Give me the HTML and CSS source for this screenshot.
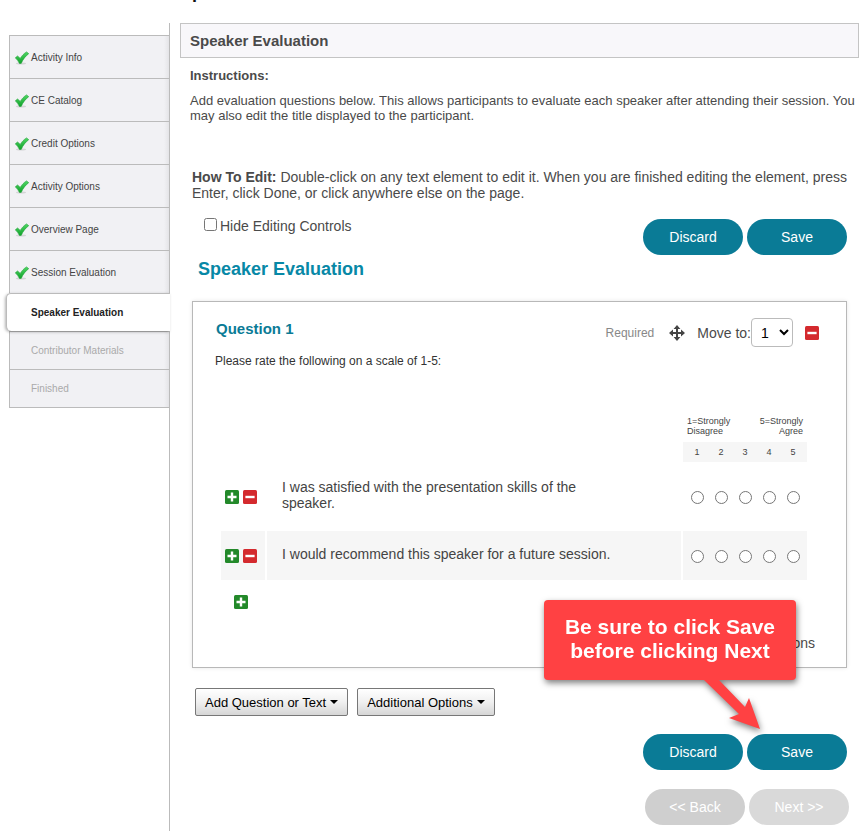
FILE: index.html
```html
<!DOCTYPE html>
<html lang="en">
<head>
    <meta charset="UTF-8">
    <meta name="viewport" content="width=device-width, initial-scale=1.0">
    <title>Speaker Evaluation</title>
    <link rel="stylesheet" href="styles.css">
</head>
<body>

    <!-- Shared icons -->
    <svg width="0" height="0" class="sprite" aria-hidden="true">
        <defs>
            <linearGradient id="check-fill" x1="0" y1="0" x2="0" y2="1">
                <stop offset="0" stop-color="#4fd764"/>
                <stop offset="1" stop-color="#12a22c"/>
            </linearGradient>
        </defs>
        <symbol id="check" viewBox="0 0 14 14">
            <ellipse cx="6" cy="12.6" rx="5" ry="1" fill="#d4d4d6"/>
            <path d="M0.3 6.8 L2.6 5 L5.2 7.4 C6.8 4.8 8.8 2.6 11.6 0.9 L13.7 2.7 C10.6 5 8 8.2 6.2 12.4 L4.4 12.4 C3.4 10.2 2 8.4 0.3 6.8 Z" fill="url(#check-fill)" stroke="#1da334" stroke-width="0.6"/>
        </symbol>
        <symbol id="plus" viewBox="0 0 14 14">
            <rect width="14" height="14" rx="1.5" fill="#23892a"/>
            <path d="M7 2.5V11.5M2.5 7H11.5" stroke="#fff" stroke-width="2.4"/>
        </symbol>
        <symbol id="minus" viewBox="0 0 14 14">
            <rect width="14" height="14" rx="1.5" fill="#d42a2e"/>
            <path d="M2.4 7H11.6" stroke="#fff" stroke-width="2.4"/>
        </symbol>
    </svg>

    <header class="page-title"><h1>Speaker Evaluation</h1></header>

    <div class="layout">
        <nav class="sidebar">
            <a href="#" class="step"><svg><use href="#check"/></svg>Activity Info</a>
            <a href="#" class="step"><svg><use href="#check"/></svg>CE Catalog</a>
            <a href="#" class="step"><svg><use href="#check"/></svg>Credit Options</a>
            <a href="#" class="step"><svg><use href="#check"/></svg>Activity Options</a>
            <a href="#" class="step"><svg><use href="#check"/></svg>Overview Page</a>
            <a href="#" class="step"><svg><use href="#check"/></svg>Session Evaluation</a>
            <a href="#" class="step active">Speaker Evaluation</a>
            <a href="#" class="step pending">Contributor Materials</a>
            <a href="#" class="step pending">Finished</a>
        </nav>

        <main class="content">
            <h2 class="section-header">Speaker Evaluation</h2>
            <div class="instructions">
                <h3>Instructions:</h3>
                <p>Add evaluation questions below. This allows participants to evaluate each speaker after attending their session. You may also edit the title displayed to the participant.</p>
            </div>

            <div class="editor">
                <p class="how-to"><strong>How To Edit:</strong> Double-click on any text element to edit it. When you are finished editing the element, press Enter, click Done, or click anywhere else on the page.</p>

                <div class="toolbar">
                    <label class="hide-controls"><input type="checkbox">Hide Editing Controls</label>
                    <div class="button-row">
                        <button class="btn">Discard</button>
                        <button class="btn">Save</button>
                    </div>
                </div>

                <h2 class="form-title">Speaker Evaluation</h2>

                <section class="question">
                    <div class="question-head">
                        <h3>Question 1</h3>
                        <span class="required">Required</span>
                        <svg class="move-icon" viewBox="0 0 16 16">
                            <path d="M8 2V14M2 8H14" stroke="#444" stroke-width="2"/>
                            <path d="M8 0L11.4 4H4.6ZM8 16L4.6 12H11.4ZM0 8L4 4.6V11.4ZM16 8L12 11.4V4.6Z" fill="#444"/>
                        </svg>
                        <label for="move-to">Move to:</label>
                        <select id="move-to"><option>1</option></select>
                        <button class="icon-btn" aria-label="Remove question"><svg><use href="#minus"/></svg></button>
                    </div>
                    <p class="question-text">Please rate the following on a scale of 1-5:</p>

                    <table class="rating">
                        <tr>
                            <td class="tools"></td>
                            <td></td>
                            <th class="legend">
                                <div class="legend-labels">
                                    <span>1=Strongly<br>Disagree</span>
                                    <span class="agree">5=Strongly<br>Agree</span>
                                </div>
                            </th>
                        </tr>
                        <tr>
                            <td></td>
                            <td></td>
                            <th class="numbers">
                                <div class="scale"><span>1</span><span>2</span><span>3</span><span>4</span><span>5</span></div>
                            </th>
                        </tr>
                        <tr class="row-first">
                            <td class="tools">
                                <div class="tool-icons">
                                    <button class="icon-btn" aria-label="Add row"><svg><use href="#plus"/></svg></button>
                                    <button class="icon-btn" aria-label="Remove row"><svg><use href="#minus"/></svg></button>
                                </div>
                            </td>
                            <td class="statement">I was satisfied with the presentation skills of the speaker.</td>
                            <td>
                                <div class="scale">
                                    <span><input type="radio" name="skills" aria-label="1"></span>
                                    <span><input type="radio" name="skills" aria-label="2"></span>
                                    <span><input type="radio" name="skills" aria-label="3"></span>
                                    <span><input type="radio" name="skills" aria-label="4"></span>
                                    <span><input type="radio" name="skills" aria-label="5"></span>
                                </div>
                            </td>
                        </tr>
                        <tr class="row-alt">
                            <td class="tools">
                                <div class="tool-icons">
                                    <button class="icon-btn" aria-label="Add row"><svg><use href="#plus"/></svg></button>
                                    <button class="icon-btn" aria-label="Remove row"><svg><use href="#minus"/></svg></button>
                                </div>
                            </td>
                            <td class="statement">I would recommend this speaker for a future session.</td>
                            <td>
                                <div class="scale">
                                    <span><input type="radio" name="recommend" aria-label="1"></span>
                                    <span><input type="radio" name="recommend" aria-label="2"></span>
                                    <span><input type="radio" name="recommend" aria-label="3"></span>
                                    <span><input type="radio" name="recommend" aria-label="4"></span>
                                    <span><input type="radio" name="recommend" aria-label="5"></span>
                                </div>
                            </td>
                        </tr>
                        <tr class="row-add">
                            <td class="tools">
                                <div class="tool-icons">
                                    <button class="icon-btn" aria-label="Add row"><svg><use href="#plus"/></svg></button>
                                </div>
                            </td>
                            <td></td>
                            <td></td>
                        </tr>
                    </table>

                    <div class="question-foot">Options</div>

                    <div class="callout">
                        Be sure to click Save before clicking Next
                        <svg class="callout-arrow" viewBox="0 0 56 50">
                            <path d="M0 0H15L41 27L45 18L56 49L25 38L35 34Z" fill="#ff4143"/>
                        </svg>
                    </div>
                </section>

                <div class="menus">
                    <button class="menu-btn">Add Question or Text <span class="caret"></span></button>
                    <button class="menu-btn">Additional Options <span class="caret"></span></button>
                </div>

                <div class="button-row">
                    <button class="btn">Discard</button>
                    <button class="btn">Save</button>
                </div>
                <div class="button-row pager">
                    <button class="btn back" disabled>&lt;&lt; Back</button>
                    <button class="btn next" disabled>Next &gt;&gt;</button>
                </div>
            </div>
        </main>
    </div>

</body>
</html>
```

FILE: styles.css
```css
* {
    box-sizing: border-box;
}

body {
    font-family: "Liberation Sans", Arial, sans-serif;
    font-size: 14px;
    line-height: 16px;
    color: #4a4a4a;
    background-color: #fff;
    margin: 0;
}

h1, h2, h3, p {
    margin: 0;
}

.sprite {
    display: block;
}

/* Only the foot of the page title shows above the layout */
.page-title {
    height: 23px;
    overflow: hidden;
    padding-left: 180px;
}

.page-title h1 {
    font-size: 18px;
    line-height: 20px;
    margin-top: -18px;
    color: #111;
}

.layout {
    display: flex;
    min-height: calc(100vh - 23px);
}

/* Sidebar */
.sidebar {
    width: 170px;
    flex-shrink: 0;
    padding: 12px 0 0 9px;
    border-right: 1px solid #bbb;
}

.step {
    display: flex;
    align-items: center;
    height: 43px;
    padding: 2px 0 0 5px;
    border: 1px solid #bbb;
    border-width: 1px 0 0 1px;
    background: linear-gradient(to left, #e4e4e7, #f1f1f4 5px);
    font-size: 10px;
    line-height: 12px;
    color: #444;
    text-decoration: none;
}

.step svg {
    width: 14px;
    height: 14px;
    margin-right: 2px;
}

.step.active {
    position: relative;
    height: 38px;
    margin: 0 -1px 0 -3px;
    padding: 0 0 0 24px;
    background: #fff;
    border-radius: 5px 0 0 5px;
    box-shadow: -1px 1px 3px rgba(0, 0, 0, 0.3);
    font-weight: bold;
    color: #222;
}

.step.pending {
    height: 38px;
    padding: 0 0 0 21px;
    color: #aaa;
}

.step.pending:last-child {
    height: 39px;
    border-bottom-width: 1px;
}

/* Main content */
.content {
    flex: 1;
    padding: 0 6px 6px 10px;
}

.section-header {
    height: 35px;
    padding: 0 9px;
    border: 1px solid #c4c4c4;
    background-color: #f8f7fa;
    font-size: 15px;
    line-height: 34px;
}

.instructions {
    padding: 10px 0 0 10px;
    font-size: 13px;
    line-height: 15px;
}

.instructions h3 {
    font-size: 13px;
    margin-bottom: 10px;
}

.editor {
    padding: 46px 12px 0;
}

.toolbar {
    display: flex;
    justify-content: space-between;
    margin-top: 18px;
}

.hide-controls {
    display: flex;
    align-items: center;
    height: 13px;
    padding-left: 12px;
}

.hide-controls input {
    width: 13px;
    height: 13px;
    margin: 0 3px 2px 0;
}

.button-row {
    display: flex;
    justify-content: flex-end;
    gap: 4px;
}

.btn {
    width: 100px;
    height: 36px;
    border: none;
    border-radius: 18px;
    background-color: #0a7b96;
    color: #fff;
    font-family: inherit;
    font-size: 14px;
}

.pager {
    margin: 19px -2px 0 0;
}

.back {
    background-color: #cfcfcf;
}

.next {
    background-color: #d9d9d9;
}

.form-title {
    margin: 4px 0 0 6px;
    font-size: 18px;
    line-height: 20px;
    color: #0788a6;
}

/* Question card */
.question {
    position: relative;
    margin-top: 22px;
    padding: 16px 26px;
    border: 1px solid #b8b8b8;
    box-shadow: 0 0 4px rgba(0, 0, 0, 0.1);
}

.question-head {
    display: flex;
    align-items: center;
    height: 29px;
}

.question-head h3 {
    flex: 1;
    margin: 0 0 8px -3px;
    font-size: 15px;
    color: #0a7b96;
}

.required {
    font-size: 12px;
    color: #888;
}

.move-icon {
    width: 16px;
    height: 16px;
    margin: 0 12px 0 15px;
}

.question-head select {
    width: 42px;
    height: 29px;
    margin: 0 12px 0 0;
    padding-left: 5px;
    border: 1px solid #bbb;
    border-radius: 4px;
    background-color: #fff;
    color: #000;
    font-family: inherit;
    font-size: 14px;
}

.question-head .icon-btn {
    margin-right: 1px;
}

.icon-btn {
    width: 14px;
    height: 14px;
    padding: 0;
    border: none;
    background: none;
}

.icon-btn svg {
    display: block;
    width: 14px;
    height: 14px;
}

.question-text {
    margin: 6px 0 0 -4px;
    font-size: 12px;
    color: #333;
}

.rating {
    width: calc(100% - 11px);
    margin-top: 45px;
    border-spacing: 2px;
}

.rating td, .rating th {
    padding: 0;
    font-weight: normal;
    color: #444;
}

.tools {
    width: 44px;
}

.tool-icons {
    display: flex;
    justify-content: center;
    gap: 4px;
    padding-right: 4px;
}

.legend {
    width: 124px;
}

.legend-labels {
    display: flex;
    justify-content: space-between;
    padding: 0 4px 4px;
    font-size: 9px;
    line-height: 10px;
    text-align: left;
}

.legend-labels .agree {
    text-align: right;
}

.numbers {
    height: 20px;
    background-color: #f6f6f6;
    font-size: 9px;
    line-height: 20px;
}

.scale {
    display: flex;
    padding: 0 2px;
}

.scale span {
    width: 24px;
    text-align: center;
}

.scale input {
    display: block;
    width: 13px;
    height: 13px;
    margin: 2px auto 0;
}

.rating .statement {
    padding: 0 60px 4px 15px;
}

.row-first {
    height: 65px;
}

.row-alt {
    height: 49px;
}

.row-alt td {
    background-color: #f6f6f6;
}

.row-add {
    height: 40px;
}

.question-foot {
    margin: 11px 5px 0 0;
    text-align: right;
}

/* Callout lies over the card and points at Save */
.callout {
    position: absolute;
    right: 50px;
    bottom: -13px;
    width: 252px;
    padding: 15px 15px 17px;
    border-radius: 4px;
    background-color: #ff4143;
    color: #fff;
    font-size: 21px;
    font-weight: bold;
    line-height: 24px;
    text-align: center;
    filter: drop-shadow(1px 3px 3px rgba(0, 0, 0, 0.5));
}

.callout-arrow {
    position: absolute;
    top: 100%;
    right: 36px;
    width: 56px;
    height: 50px;
}

.menus {
    display: flex;
    gap: 9px;
    margin: 20px 0 18px 3px;
}

.menu-btn {
    display: flex;
    align-items: center;
    height: 28px;
    padding: 0 9px;
    border: 1px solid #777;
    border-radius: 2px;
    background: linear-gradient(#fff, #f0f0f0 50%, #d6d6d6);
    color: #000;
    font-family: inherit;
    font-size: 13px;
}

.caret {
    margin-left: 4px;
    border: 4px solid transparent;
    border-top-color: #000;
    border-bottom-width: 0;
}
```
